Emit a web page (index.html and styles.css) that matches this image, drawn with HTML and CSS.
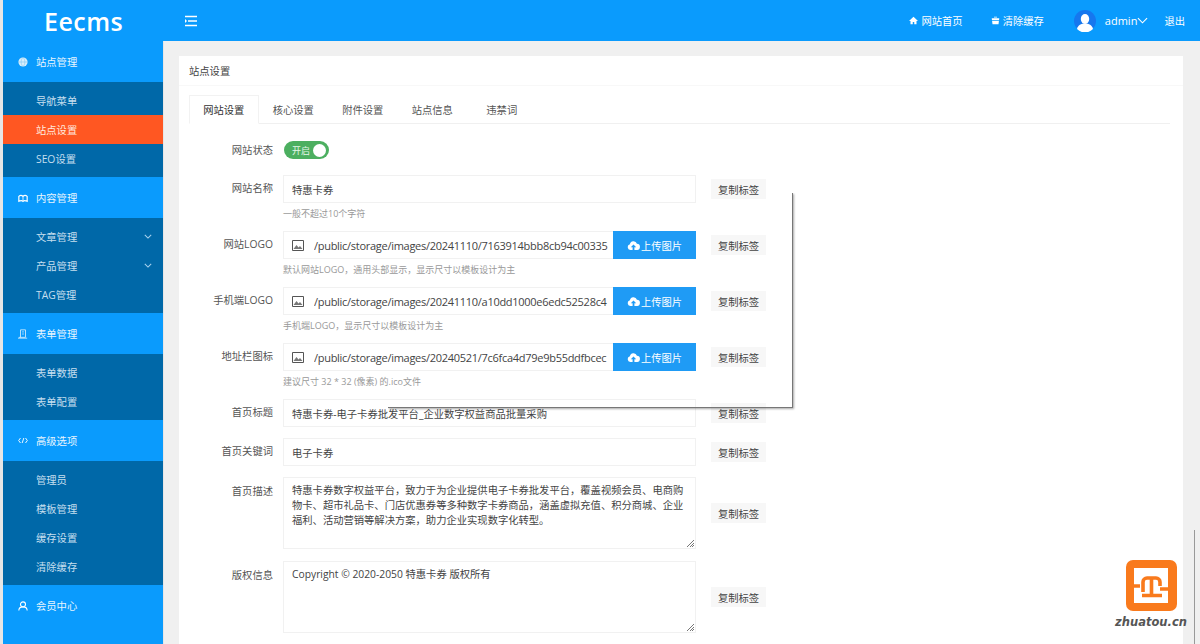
FILE: index.html
```html
<!DOCTYPE html>
<html lang="zh-CN">
<head>
  <meta charset="UTF-8" />
  <title>站点设置</title>
  <link rel="stylesheet" href="styles.css">
</head>
<body>
  <div class="app">
    <header class="topbar">
      <div class="logo">Eecms</div>
      <svg class="menu-toggle" viewBox="0 0 12 12" width="12" height="12"><path d="M0 1.500h12M3 6h9M0 10.500h12" stroke="#fff" stroke-width="1.600" fill="none"/><path d="M0 4v4l2-2z" fill="#fff"/></svg>
      <nav class="top-links">
        <a class="top-link"><svg viewBox="0 0 12 12" width="9" height="9"><path d="M6 1 0 6.500h2V11h3V8h2v3h3V6.500h2z" fill="#fff"/></svg>网站首页</a>
        <a class="top-link last"><svg viewBox="0 0 12 12" width="9" height="9"><path d="M1 3h10L10 11H2zM4 1h4v1H4z" fill="#fff"/><path d="M1 6h10" stroke="#0a9bfd"/></svg>清除缓存</a>
        <div class="user">
          <svg class="avatar" viewBox="0 0 22 22" width="22" height="22"><circle cx="11" cy="11" r="11" fill="#1677ee"/><ellipse cx="11" cy="9" rx="4.200" ry="5" fill="#fff"/><path d="M3 19c1-4 4-5.500 8-5.500s7 1.500 8 5.500a11 11 0 0 1-16 0z" fill="#fff"/></svg>
          <span>admin</span>
          <svg viewBox="0 0 12 7" width="11" height="7"><path d="M1 1l5 5 5-5" stroke="#fff" stroke-width="1.200" fill="none"/></svg>
        </div>
        <a class="logout">退出</a>
      </nav>
    </header>

    <div class="main">
      <aside class="sidebar">
        <div class="nav-title">
          <svg viewBox="0 0 12 12" width="10" height="10"><circle cx="6" cy="6" r="5.500" fill="#d8eefc"/><path d="M.5 6h11M6 .5c-3 3-3 8 0 11M6 .5c3 3 3 8 0 11" stroke="#7cc4f0" stroke-width=".7" fill="none"/></svg>站点管理
        </div>
        <ul class="nav-sub">
          <li>导航菜单</li>
          <li class="current">站点设置</li>
          <li>SEO设置</li>
        </ul>
        <div class="nav-title">
          <svg viewBox="0 0 12 12" width="11" height="10"><path d="M1 10V4c2-2 4-1 5 0 1-1 3-2 5 0v6c-2-1-4-1-5 0-1-1-3-1-5 0z" fill="none" stroke="#fff" stroke-width="1.400"/><path d="M6 4v6" stroke="#fff"/></svg>内容管理
        </div>
        <ul class="nav-sub">
          <li>文章管理<svg class="arrow" viewBox="0 0 10 6" width="8" height="5"><path d="M1 1l4 4 4-4" stroke="#a9d3ee" stroke-width="1.300" fill="none"/></svg></li>
          <li>产品管理<svg class="arrow" viewBox="0 0 10 6" width="8" height="5"><path d="M1 1l4 4 4-4" stroke="#a9d3ee" stroke-width="1.300" fill="none"/></svg></li>
          <li>TAG管理</li>
        </ul>
        <div class="nav-title">
          <svg viewBox="0 0 12 12" width="10" height="10"><path d="M3 1h6v9H1M3 1v9M5 3.500h2M5 6h2" fill="none" stroke="#d8eefc"/><path d="M0 11h11" stroke="#d8eefc"/></svg>表单管理
        </div>
        <ul class="nav-sub">
          <li>表单数据</li>
          <li>表单配置</li>
        </ul>
        <div class="nav-title">
          <svg viewBox="0 0 12 8" width="10" height="7"><path d="M3 1 .8 4 3 7M9 1l2.200 3L9 7M7 1 5 7" stroke="#fff" fill="none" stroke-width="1.100"/></svg>高级选项
        </div>
        <ul class="nav-sub">
          <li>管理员</li>
          <li>模板管理</li>
          <li>缓存设置</li>
          <li>清除缓存</li>
        </ul>
        <div class="nav-title">
          <svg viewBox="0 0 12 12" width="10" height="10"><circle cx="6" cy="4" r="3" fill="none" stroke="#fff" stroke-width="1.300"/><path d="M1 11.500c0-3 2-4.500 5-4.500s5 1.500 5 4.500" fill="none" stroke="#fff" stroke-width="1.300"/></svg>会员中心
        </div>
      </aside>

      <main class="content">
        <section class="card">
          <div class="card-head">站点设置</div>
          <div class="card-body">
            <div class="tabs">
              <div class="tab active">网站设置</div>
              <div class="tab">核心设置</div>
              <div class="tab">附件设置</div>
              <div class="tab">站点信息</div>
              <div class="tab">违禁词</div>
            </div>

            <div class="form">
              <div class="row row-switch">
                <label>网站状态</label>
                <div class="switch"><span>开启</span><i></i></div>
              </div>

              <div class="row">
                <label>网站名称</label>
                <div class="field">
                  <div class="input">特惠卡券</div>
                  <div class="help">一般不超过10个字符</div>
                </div>
                <button class="copy">复制标签</button>
              </div>

              <div class="row">
                <label>网站LOGO</label>
                <div class="field">
                  <div class="input input-file">
                    <svg class="pic" viewBox="0 0 12 11" width="12" height="11"><path d="M.5.500h11v10H.5z" fill="none" stroke="#555"/><path d="M1.500 9 4.500 5l2 2.500L8 6l2.500 3z" fill="#777"/></svg>
                    <span class="path">/public/storage/images/20241110/7163914bbb8cb94c00335</span>
                    <button class="upload"><svg viewBox="0 0 14 10" width="13" height="9"><path d="M3.500 10a3.200 3.200 0 0 1-.5-6.300A4 4 0 0 1 10.800 3a3.500 3.500 0 0 1-.3 7H8V7h2L7 4 4 7h2v3z" fill="#fff"/></svg>上传图片</button>
                  </div>
                  <div class="help">默认网站LOGO，通用头部显示，显示尺寸以模板设计为主</div>
                </div>
                <button class="copy">复制标签</button>
              </div>

              <div class="row">
                <label>手机端LOGO</label>
                <div class="field">
                  <div class="input input-file">
                    <svg class="pic" viewBox="0 0 12 11" width="12" height="11"><path d="M.5.500h11v10H.5z" fill="none" stroke="#555"/><path d="M1.500 9 4.500 5l2 2.500L8 6l2.500 3z" fill="#777"/></svg>
                    <span class="path">/public/storage/images/20241110/a10dd1000e6edc52528c4</span>
                    <button class="upload"><svg viewBox="0 0 14 10" width="13" height="9"><path d="M3.500 10a3.200 3.200 0 0 1-.5-6.300A4 4 0 0 1 10.800 3a3.500 3.500 0 0 1-.3 7H8V7h2L7 4 4 7h2v3z" fill="#fff"/></svg>上传图片</button>
                  </div>
                  <div class="help">手机端LOGO，显示尺寸以模板设计为主</div>
                </div>
                <button class="copy">复制标签</button>
              </div>

              <div class="row">
                <label>地址栏图标</label>
                <div class="field">
                  <div class="input input-file">
                    <svg class="pic" viewBox="0 0 12 11" width="12" height="11"><path d="M.5.500h11v10H.5z" fill="none" stroke="#555"/><path d="M1.500 9 4.500 5l2 2.500L8 6l2.500 3z" fill="#777"/></svg>
                    <span class="path">/public/storage/images/20240521/7c6fca4d79e9b55ddfbcec</span>
                    <button class="upload"><svg viewBox="0 0 14 10" width="13" height="9"><path d="M3.500 10a3.200 3.200 0 0 1-.5-6.300A4 4 0 0 1 10.800 3a3.500 3.500 0 0 1-.3 7H8V7h2L7 4 4 7h2v3z" fill="#fff"/></svg>上传图片</button>
                  </div>
                  <div class="help">建议尺寸 32 * 32 (像素) 的.ico文件</div>
                </div>
                <button class="copy">复制标签</button>
              </div>

              <div class="row row-plain">
                <label>首页标题</label>
                <div class="field"><div class="input">特惠卡券-电子卡券批发平台_企业数字权益商品批量采购</div></div>
                <button class="copy">复制标签</button>
              </div>

              <div class="row row-plain">
                <label>首页关键词</label>
                <div class="field"><div class="input">电子卡券</div></div>
                <button class="copy">复制标签</button>
              </div>

              <div class="row row-area">
                <label>首页描述</label>
                <div class="field">
                  <div class="input textarea">特惠卡券数字权益平台，致力于为企业提供电子卡券批发平台，覆盖视频会员、电商购物卡、超市礼品卡、门店优惠券等多种数字卡券商品，涵盖虚拟充值、积分商城、企业福利、活动营销等解决方案，助力企业实现数字化转型。<svg class="grip" viewBox="0 0 7 7" width="7" height="7"><path d="M7 0 0 7M7 3 3 7M7 5 5 7" stroke="#777"/></svg></div>
                </div>
                <button class="copy">复制标签</button>
              </div>

              <div class="row row-area">
                <label>版权信息</label>
                <div class="field">
                  <div class="input textarea">Copyright © 2020-2050 特惠卡券 版权所有<svg class="grip" viewBox="0 0 7 7" width="7" height="7"><path d="M7 0 0 7M7 3 3 7M7 5 5 7" stroke="#777"/></svg></div>
                </div>
                <button class="copy">复制标签</button>
              </div>
            </div>
          </div>
        </section>
      </main>
    </div>
  </div>

  <!-- leftover window edge in the capture -->
  <div class="ghost-edge"></div>
  <div class="scroll-line"></div>

  <div class="watermark">
    <svg viewBox="0 0 51 51" width="51" height="51">
      <rect width="51" height="51" rx="7" fill="#f97a1c"/>
      <path d="M8 8h34v35H8z" fill="#fff"/>
      <path d="M8 26h6M17 32V22a4 4 0 0 1 4-4h9a4 4 0 0 1 4 4v4M25.500 18v17M16 35.500h20M34 29h8" stroke="#f97a1c" stroke-width="3.600" fill="none"/>
    </svg>
    <div class="watermark-text">zhuatou.cn</div>
  </div>
</body>
</html>
```

FILE: styles.css
```css
* {
  box-sizing: border-box;
}
html, body {
  margin: 0;
  padding: 0;
  height: 644px;
  overflow: hidden;
}
body {
  font-family: 'Open Sans', 'Noto Sans CJK SC', sans-serif;
  font-size: 10.3px;
  color: #555;
  background-color: #e6e6e6;
}
ul {
  list-style: none;
  margin: 0;
  padding: 0;
}
button {
  font-family: inherit;
  border: none;
}
.app {
  margin-left: 3px;
  height: 644px;
  display: flex;
  flex-direction: column;
}
.topbar {
  height: 41px;
  flex: none;
  display: flex;
  align-items: center;
  background-color: #0a9bfd;
  color: white;
}
.logo {
  width: 177px;
  padding-left: 41px;
  font-family: 'Open Sans', sans-serif;
  font-size: 25px;
  font-weight: 600;
  letter-spacing: 0.5px;
}
.menu-toggle {
  flex: none;
  margin-left: 5px;
}
.top-links {
  margin-left: auto;
  display: flex;
  align-items: center;
}
.top-link {
  display: flex;
  align-items: center;
  gap: 3px;
  margin-right: 28px;
}
.top-link.last {
  margin-right: 30px;
}
.user {
  display: flex;
  align-items: center;
  font-size: 11px;
  margin-right: 16px;
}
.avatar {
  margin-right: 9px;
}
.logout {
  margin-right: 15px;
}
.main {
  flex: 1;
  display: flex;
  min-height: 0;
}
.sidebar {
  width: 160px;
  flex: none;
  background-color: #0a9bfd;
  color: white;
}
.nav-title {
  height: 41px;
  display: flex;
  align-items: center;
  padding-left: 15px;
  color: #e8f5fe;
}
.nav-title svg {
  width: 10px;
  margin-right: 8px;
}
.nav-sub {
  padding: 4px 0;
  background-color: #0068a8;
  color: #c6dfef;
}
.nav-sub li {
  height: 29px;
  display: flex;
  align-items: center;
  justify-content: space-between;
  padding: 0 11px 0 33px;
}
.nav-sub li.current {
  background-color: #ff5722;
  color: #ffe9df;
}
.content {
  flex: 1;
  margin-left: 1px;
  padding: 15px 17px 0 15px;
  background-color: #f0f0f0;
  min-width: 0;
  display: flex;
}
.card {
  flex: 1;
  min-width: 0;
  background-color: white;
}
.card-head {
  height: 30px;
  padding: 0 10px;
  display: flex;
  align-items: center;
  color: #444;
  border-bottom: 1px solid #f8f8f8;
}
.card-body {
  padding: 9px 13px 0 10px;
}
.tabs {
  display: flex;
  height: 29px;
  border-bottom: 1px solid #f0f0f0;
}
.tab {
  width: 69.5px;
  height: 29px;
  display: flex;
  align-items: center;
  justify-content: center;
}
.tab.active {
  color: #333;
  border: 1px solid #f2f2f2;
  border-bottom: 1px solid white;
  background-color: white;
}
.form {
  padding-top: 16px;
}
.row {
  display: flex;
  align-items: flex-start;
  margin-bottom: 10px;
}
.row label {
  width: 84px;
  flex: none;
  text-align: right;
  line-height: 27px;
}
.row-switch {
  height: 20px;
  margin-bottom: 15px;
  align-items: center;
}
.row-switch label {
  line-height: 20px;
}
.switch {
  margin-left: 11px;
  width: 45px;
  height: 18px;
  border-radius: 9px;
  background-color: #4caf60;
  color: #e4f6e8;
  font-size: 9px;
  display: flex;
  align-items: center;
  justify-content: space-between;
  padding: 0 3px 0 8px;
}
.switch i {
  width: 13px;
  height: 13px;
  border-radius: 50%;
  background-color: white;
}
.field {
  width: 413px;
  margin-left: 10px;
  flex: none;
}
.input {
  position: relative;
  height: 28px;
  padding: 0 8px;
  border: 1px solid #f1f1f1;
  display: flex;
  align-items: center;
  color: #444;
  background-color: white;
}
.input-file {
  padding-right: 0;
  border-right: 0;
}
.pic {
  flex: none;
  margin-right: 10px;
}
.path {
  flex: 1;
  min-width: 0;
  overflow: hidden;
  white-space: nowrap;
  font-size: 11px;
  letter-spacing: -0.28px;
}
.upload {
  flex: none;
  width: 83px;
  height: 28px;
  margin: -1px 0;
  background-color: #1f9bf5;
  color: white;
  font-size: 10.3px;
  display: flex;
  align-items: center;
  justify-content: center;
  gap: 1px;
}
.help {
  margin-top: 4px;
  line-height: 14px;
  font-size: 9px;
  color: #999;
}
.copy {
  flex: none;
  width: 55px;
  height: 20px;
  margin: 4px 0 0 15px;
  background-color: #f7f7f7;
  color: #444;
  font-size: 10.3px;
  padding: 0;
}
.row-plain {
  margin-bottom: 11px;
}
.row-area {
  align-items: center;
  margin-bottom: 12px;
}
.row-area:last-child {
  margin-bottom: 0;
}
.row-area label {
  align-self: flex-start;
  line-height: 29px;
}
.row-area .copy {
  margin-top: 0;
}
.textarea {
  display: block;
  height: 72px;
  padding: 5px 8px;
  line-height: 15px;
}
.grip {
  position: absolute;
  right: 1px;
  bottom: 1px;
}
.ghost-edge {
  position: absolute;
  left: 388px;
  top: 193px;
  width: 405px;
  height: 215px;
  border-right: 1px solid #777;
  border-bottom: 1px solid #777;
  box-shadow: 1px 1px 2px rgba(0, 0, 0, 0.35);
  clip-path: inset(0 -4px -4px 0);
}
.scroll-line {
  position: absolute;
  left: 1194px;
  top: 530px;
  width: 1px;
  height: 114px;
  background-color: #999;
}
.watermark {
  position: absolute;
  left: 1115px;
  top: 560px;
  width: 72px;
  display: flex;
  flex-direction: column;
  align-items: center;
}
.watermark-text {
  margin-top: 4px;
  font-family: 'DejaVu Sans', sans-serif;
  font-size: 11.500px;
  font-weight: bold;
  font-style: italic;
  color: #555;
  white-space: nowrap;
}
```
